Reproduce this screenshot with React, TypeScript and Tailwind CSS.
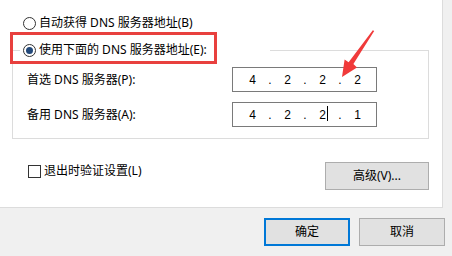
const font = "font-['Noto_Sans','Noto_Sans_CJK_SC',sans-serif]";

const Radio = ({ checked }: { checked?: boolean }) => (
  <span className="flex items-center justify-center w-[13px] h-[13px] rounded-full border border-[#333] bg-white shrink-0">
    {checked && <span className="w-[7px] h-[7px] rounded-full bg-[#23497a]" />}
  </span>
);

const IpBox = ({ parts, caretAfter }: { parts: string[]; caretAfter?: number }) => (
  <div className="flex items-center w-[145px] h-[25px] border border-[#7a7a7a] bg-white pl-[7px] font-['Liberation_Sans',sans-serif] text-[12px] text-black">
    {parts.map((p, i) => (
      <div key={i} className="flex items-center">
        <span className="w-[25px] flex justify-center">
          <span className="relative">
            {p}
            {caretAfter === i && (
              <span className="absolute left-full top-[-1px] ml-[1px] w-px h-[15px] bg-black" />
            )}
          </span>
        </span>
        {i < parts.length - 1 && <span className="w-[10px] text-center">.</span>}
      </div>
    ))}
  </div>
);

const App = () => {
  return (
    <div className={`relative w-[452px] h-[256px] overflow-hidden bg-[#f0f0f0] text-[12px] leading-[16px] text-black ${font}`}>
      <div className="relative w-[443px] h-[208px] bg-white border-r border-b border-[#dcdcdc] flex flex-col">
        {/* auto dns */}
        <div className="flex items-center gap-[3px] pl-[23px] pt-[15px] h-[31px]">
          <Radio />
          <span>自动获得 DNS 服务器地址(B)</span>
        </div>

        {/* manual dns group */}
        <fieldset className="ml-[12px] mt-[11px] w-[417px] border border-[#dcdcdc] pb-[11px]">
          <legend className="ml-[7px] w-[250px] h-[16px] pl-[3px] flex items-center gap-[3px]">
            <Radio checked />
            <span>使用下面的 DNS 服务器地址(E):</span>
          </legend>
          <div className="flex flex-col gap-[10px] pt-[9px]">
            <div className="flex items-center h-[25px]">
              <span className="w-[219px] pl-[14px]">首选 DNS 服务器(P):</span>
              <IpBox parts={["4", "2", "2", "2"]} />
            </div>
            <div className="flex items-center h-[25px]">
              <span className="w-[219px] pl-[14px]">备用 DNS 服务器(A):</span>
              <IpBox parts={["4", "2", "2", "1"]} caretAfter={2} />
            </div>
          </div>
        </fieldset>

        <div className="flex items-start mt-[23px] pl-[28px] pr-[13px]">
          <label className="flex items-center gap-[3px] mt-[1px]">
            <span className="w-[13px] h-[13px] border border-[#333] bg-white" />
            <span>退出时验证设置(L)</span>
          </label>
          <button className="ml-auto w-[104px] h-[28px] bg-[#e1e1e1] border border-[#adadad] text-[12px]">
            高级(V)...
          </button>
        </div>

        {/* annotation box */}
        <div className="absolute left-[10px] top-[32px] w-[207px] h-[32px] border-[3px] border-[#e8403e]" />
      </div>

      <div className="flex justify-end gap-[9px] pr-[7px] mt-[10px]">
        <button className="w-[86px] h-[28px] bg-[#e1e1e1] border-2 border-[#0078d7]">确定</button>
        <button className="w-[86px] h-[28px] bg-[#e1e1e1] border border-[#adadad]">取消</button>
      </div>

      {/* annotation arrow */}
      <svg className="absolute left-0 top-0 pointer-events-none" width="452" height="256" viewBox="0 0 452 256">
        <polygon
          points="374.2,31 353.4,64 357,67.4 342,77 344.6,59.4 348.6,62.2 372.8,30.2"
          fill="#f03a3a"
        />
      </svg>
    </div>
  );
};

export default App;
